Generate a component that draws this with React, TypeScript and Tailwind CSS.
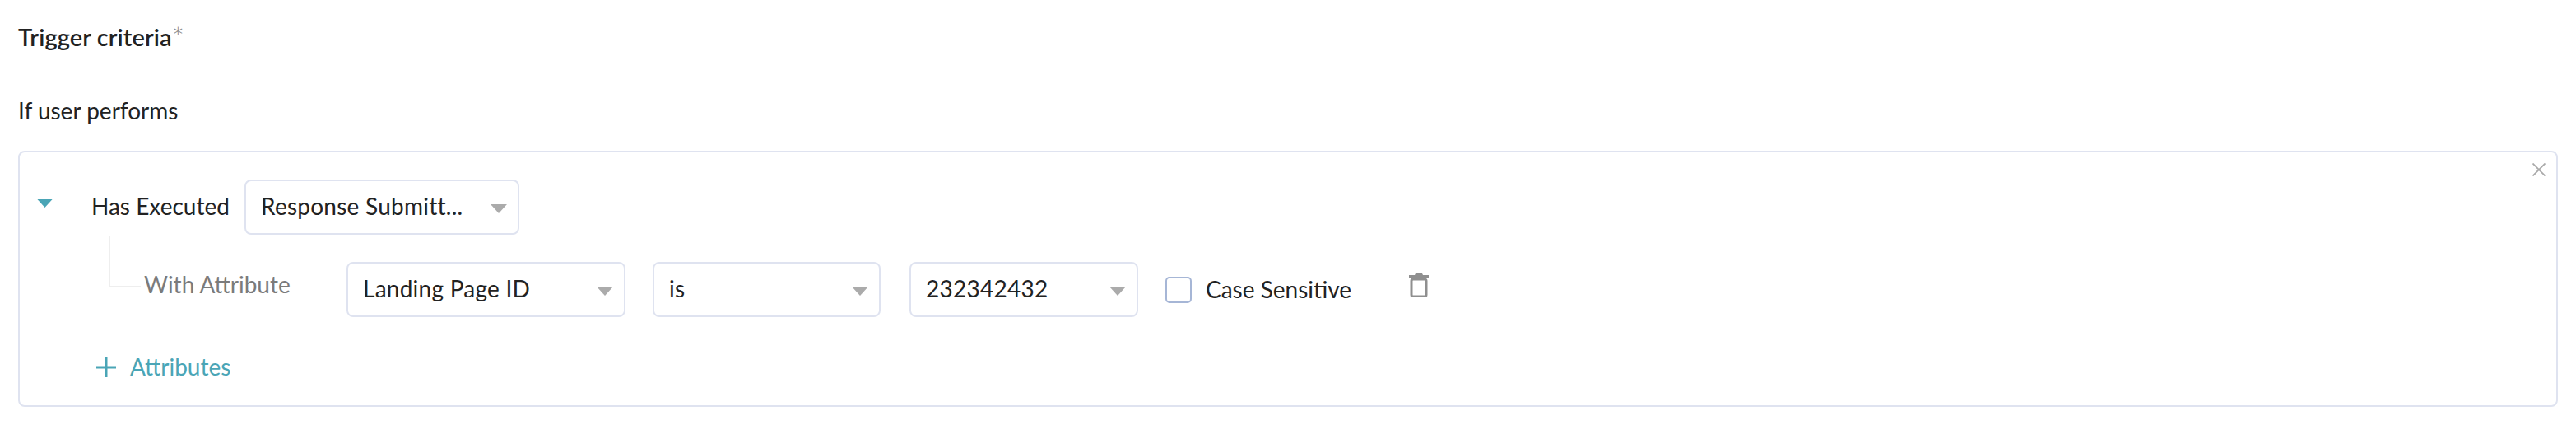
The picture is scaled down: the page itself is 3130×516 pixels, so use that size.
import React from "react";

const font = { fontFamily: '"Lato", "Liberation Sans", sans-serif' };

function Caret({ className }: { className: string }) {
  return (
    <svg viewBox="0 0 20 11" className={className} aria-hidden="true">
      <path d="M0 0H20L10 11Z" fill="currentColor" />
    </svg>
  );
}

function Select({ label, className }: { label: string; className: string }) {
  return (
    <div className={`flex h-[67px] shrink-0 items-center justify-between rounded-lg border-2 border-[#dfe3f0] bg-white pl-[18px] pr-[13px] text-[#222222] ${className}`}>
      <span className="-mt-[3px] whitespace-nowrap tracking-[0.25px]">{label}</span>
      <Caret className="mt-[3px] h-[11px] w-[20px] text-[#ababab]" />
    </div>
  );
}

export default function App() {
  return (
    <div style={font} className="h-[516px] w-[3130px] bg-white px-[22px] text-[28px] text-[#222222]">
      <div className="flex h-[90px] items-center pb-[2px] font-semibold leading-none">
        <span className="text-[29px] tracking-[0.1px]">Trigger criteria</span>
        <span className="mt-[2px] text-[36px] font-light text-[#8a8a8a]">*</span>
      </div>
      <div className="flex h-[93px] items-center pb-[5px] leading-none">If user performs</div>
      <div className="relative h-[311px] w-[3086px] rounded-lg border-2 border-[#dfe3f0] pt-[33px]">
        <svg viewBox="0 0 16 16" className="absolute right-[13px] top-[13px] h-[16px] w-[16px]" aria-hidden="true">
          <path d="M0.5 0.5L15.5 15.5M15.5 0.5L0.5 15.5" stroke="#a9a9a9" strokeWidth="1.8" fill="none" />
        </svg>
        <div className="flex items-center pl-[21px]">
          <Caret className="-mt-[9px] h-[10px] w-[19px] text-[#4aa5b6]" />
          <span className="-mt-[4px] ml-[47px] w-[186px] whitespace-nowrap">Has Executed</span>
          <Select label="Response Submitt..." className="w-[334px]" />
        </div>
        <div className="mt-[33px] flex items-start pl-[108px]">
          <div className="-mt-[32px] h-[63px] w-[39px] shrink-0 border-b-2 border-l-2 border-[#eeeeee]" />
          <span className="ml-[4px] mt-[13px] w-[246px] shrink-0 whitespace-nowrap leading-none text-[#7b7b7b]">With Attribute</span>
          <Select label="Landing Page ID" className="w-[339px]" />
          <div className="flex h-[67px] items-center">
            <Select label="is" className="ml-[33px] w-[277px]" />
            <Select label="232342432" className="ml-[35px] w-[278px]" />
            <div className="ml-[33px] h-[32px] w-[32px] rounded-[5px] border-2 border-[#a6b6d6] bg-white" />
            <span className="-mt-[2px] ml-[17px] w-[179px] whitespace-nowrap">Case Sensitive</span>
            <svg viewBox="0 0 24 30" className="-mt-[11px] ml-[68px] h-[30px] w-[24px]" aria-hidden="true">
              <path d="M8 1H16L17 3H24V6H0V3H7Z" fill="#8f8f8f" />
              <rect x="3" y="8" width="18" height="21" rx="2" fill="none" stroke="#8f8f8f" strokeWidth="3" />
            </svg>
          </div>
        </div>
        <div className="mt-[48px] flex items-center pl-[93px] text-[#4aa5b6]">
          <svg viewBox="0 0 24 24" className="h-[24px] w-[24px]" aria-hidden="true">
            <path d="M12 0V24M0 12H24" stroke="currentColor" strokeWidth="3" fill="none" />
          </svg>
          <span className="-mt-[2px] ml-[17px] leading-none">Attributes</span>
        </div>
      </div>
    </div>
  );
}
